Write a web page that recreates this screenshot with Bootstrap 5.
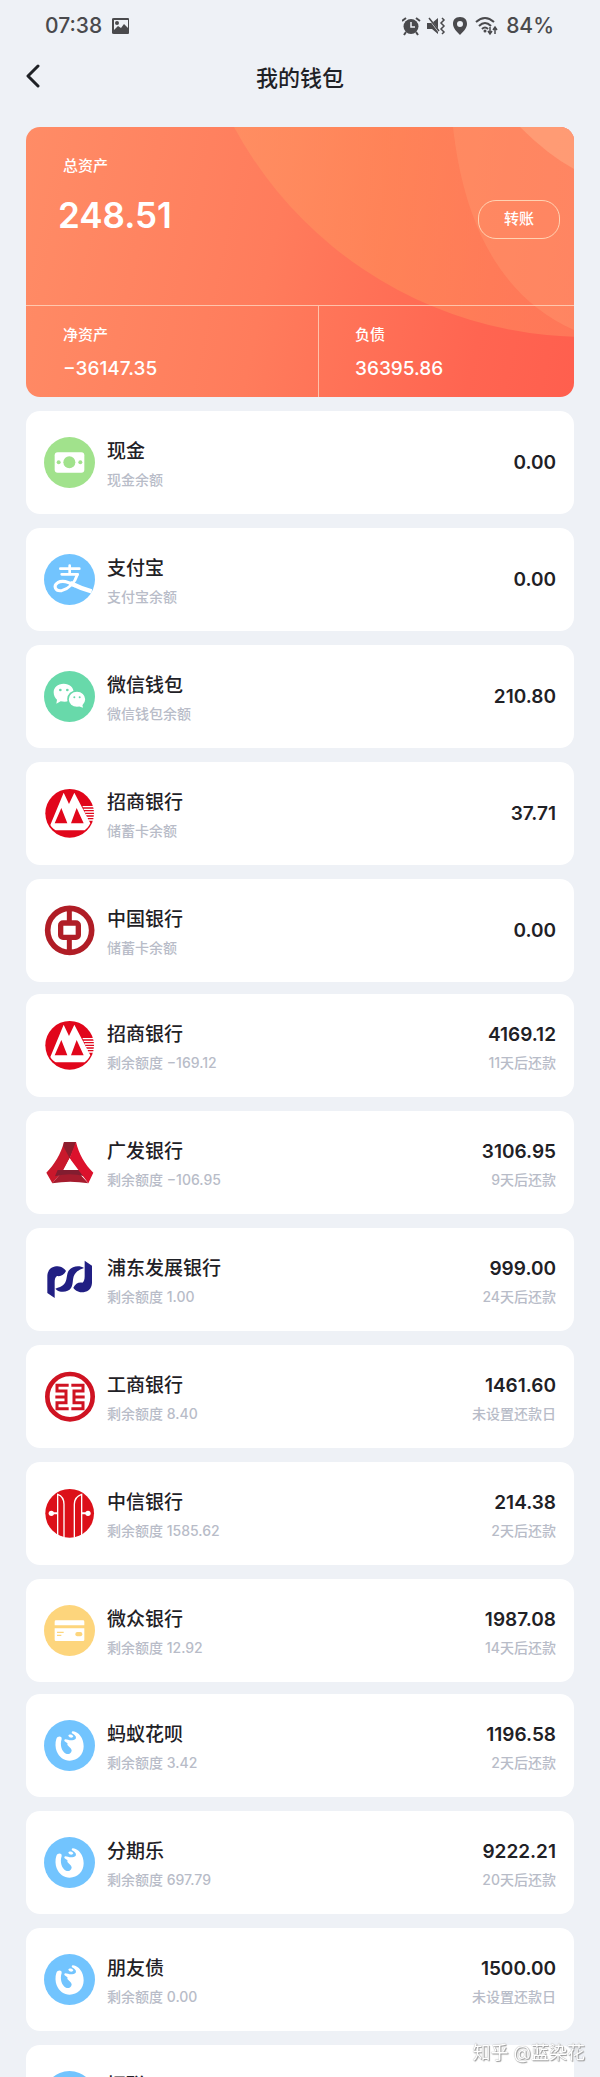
<!DOCTYPE html>
<html lang="zh-CN">
<head>
<meta charset="utf-8">
<meta name="viewport" content="width=device-width, initial-scale=1">
<title>我的钱包</title>
<link href="https://cdn.jsdelivr.net/npm/bootstrap@5.3.0/dist/css/bootstrap.min.css" rel="stylesheet">
<style>
  body { background: #eef1f6; color: #1f2126; font-family: Inter, "Noto Sans CJK SC", sans-serif; height: 100vh; overflow: hidden; }
  .status { height: 51px; padding: 0 46px 0 45px; color: #4a4a4d; font-size: 21px; font-weight: 500; line-height: 28px; }
  .topbar { height: 53px; margin-bottom: 23px; }
  .topbar h1 { font-size: 22px; font-weight: 500; line-height: 30px; }
  .back { left: 17px; top: 9px; width: 32px; height: 32px; color: #1f2126; }
  main { padding: 0 26px; }
  .assets { border-radius: 14px; background: linear-gradient(102deg, #ff8c66 0%, #ff7c5c 45%, #ff6551 82%, #ff5f4e 100%); color: #fff; }
  .assets-top { height: 179px; padding: 25px 14px 0 32px; border-bottom: 1px solid rgba(255,235,215,.65); }
  .assets-label { font-size: 15px; font-weight: 500; line-height: 28px; }
  .assets-top .assets-label { padding-left: 5px; }
  .total { font-size: 35px; font-weight: 600; line-height: 46px; }
  .total-row { margin-top: 11px; }
  .transfer { width: 82px; height: 39px; margin-top: 9px; border: 1px solid rgba(255,235,205,.75); border-radius: 18px; color: #fff; font-size: 15px; font-weight: 500; }
  .half { height: 91px; padding: 15px 0 0 37px; }
  .half + .half { padding-left: 36px; border-left: 1px solid rgba(255,235,215,.65); }
  .half-value { font-size: 19px; font-weight: 500; line-height: 40px; }
  .half-net { flex: 0 0 292px; }
  .accounts { gap: 14px; margin-top: 12px; }
  .funds { margin-top: 14px; }
  .account { height: 103px; padding: 0 18px; gap: 12px; border-radius: 14px; background: #fff; color: inherit; flex-shrink: 0; }
  .account > svg { width: 51px; height: 51px; flex: none; }
  .lines { padding-top: 5px; }
  .name { font-size: 19px; font-weight: 500; line-height: 30px; }
  .amount { font-size: 19px; font-weight: 600; line-height: 30px; }
  .note { font-size: 14px; font-weight: 500; line-height: 26px; color: #b8bcc8; }
  .watermark { right: 15px; bottom: 9px; font-size: 18px; line-height: 30px; color: #fff; text-shadow: 0 0 1px #888, 1px 1px 1px #999; }
</style>
</head>
<body>
<svg width="0" height="0" class="position-absolute" aria-hidden="true">
  <symbol id="cash" viewBox="72 111 153 153">
    <circle cx="148.500" cy="187.500" r="76.500" fill="#a1e28c"/>
    <rect x="104" y="157" width="89" height="61" rx="9" fill="#fff"/>
    <g fill="#a1e28c"><circle cx="148" cy="187" r="18"/><circle cx="116" cy="187" r="6"/><circle cx="181" cy="187" r="6"/></g>
  </symbol>
  <symbol id="alipay" viewBox="72 460 153 153">
    <circle cx="148.500" cy="536.500" r="76.500" fill="#72c4fe"/>
    <g fill="none" stroke="#fff" stroke-width="8" stroke-linecap="round">
      <path d="M121 504H178M149 495V521M125 521H173"/>
      <path d="M172 522C165 545 147 564 125 570C105 573 99 555 113 546C127 538 148 545 164 555" stroke-width="9"/>
      <path d="M150 547C172 558 192 566 215 572" stroke-width="13" stroke-linecap="butt"/>
    </g>
  </symbol>
  <symbol id="wechat" viewBox="72 90 153 153">
    <circle cx="148.500" cy="166.500" r="76.500" fill="#68d9aa"/>
    <path d="M131 128C113 128 101 139 101 154C101 163 105 171 111 176L109 188L122 181C126 182 130 182 134 182C152 181 161 169 161 155C161 139 149 128 131 128Z" fill="#fff"/>
    <path d="M171 150C155 150 144 161 144 175C144 190 156 200 171 200L178 199L192 204L190 193C195 188 198 182 198 175C198 160 186 150 171 150Z" fill="#fff" stroke="#68d9aa" stroke-width="5"/>
    <g fill="#68d9aa"><circle cx="121" cy="147" r="4"/><circle cx="142" cy="147" r="4"/><circle cx="163" cy="169" r="3"/><circle cx="179" cy="169" r="3"/></g>
  </symbol>
  <symbol id="cmb" viewBox="72 441 153 153">
    <circle cx="149" cy="517" r="73" fill="#e1061b"/>
    <path d="M131 455L147 489L163 455L211 547C207 556 201 563 194 568H107C100 564 95 559 91 552Z" fill="#fff"/>
    <path d="M104 547L124 501L142 547ZM153 547L170 501L191 547Z" fill="#e1061b"/>
    <path d="M188 497H221M191 505H223M194 513H224M197 521H223M201 529H222M205 537H220" stroke="#fff" stroke-width="4"/>
  </symbol>
  <symbol id="boc" viewBox="72 101 153 153">
    <g fill="none" stroke="#b01d26">
      <circle cx="149" cy="177" r="66" stroke-width="17"/>
      <path d="M148 110V150M148 200V245" stroke-width="15"/>
      <rect x="122" y="155" width="53" height="43" rx="7" stroke-width="16"/>
    </g>
  </symbol>
  <symbol id="cgb" viewBox="72 96 153 153">
    <path d="M132 111H168L166 124L149 160L131 195L97 235L79 203C103 180 123 145 132 111Z" fill="#c9182c"/>
    <path d="M132 111H168L149 160L130 124Z" fill="#8c1d2e"/>
    <path d="M131 195H168L205 235Q150 226 97 235Z" fill="#a51c2e"/>
    <path d="M113 195H185L193 214Q150 201 105 214Z" fill="#821d30"/>
    <path d="M168 111C176 145 195 180 220 203L205 235L149 160Z" fill="#dc112c"/>
    <path d="M149 160L130 195H168Z" fill="#fff"/>
  </symbol>
  <symbol id="spdb" viewBox="72 447 153 153">
    <g fill="#211f83">
      <path d="M82 512C83 492 98 484 113 484C125 485 135 492 138 498C132 510 123 515 111 513C106 516 104 522 104 532V579L82 564Z"/>
      <path d="M216 534C215 554 200 562 185 562C173 561 163 554 160 548C166 536 175 531 187 533C192 530 194 524 194 514V467L216 482Z"/>
      <path d="M192 489C180 481 158 482 147 496C138 508 143 527 132 538C126 545 115 548 106 551C119 565 144 563 153 549C162 535 155 517 167 504C173 496 184 492 192 489Z"/>
    </g>
  </symbol>
  <symbol id="icbc" viewBox="72 91 153 153">
    <g fill="none" stroke="#cf1322">
      <circle cx="150" cy="168" r="68" stroke-width="14"/>
      <path d="M146 134H111V151H138V186H111V204H146M106 169H138M154 134H189V151H162V186H189V204H154M194 169H162" stroke-width="9"/>
    </g>
  </symbol>
  <symbol id="citic" viewBox="72 441 153 153">
    <circle cx="149" cy="517" r="73" fill="#dc1019"/>
    <g fill="none" stroke="#fff" stroke-width="4">
      <path d="M113 582V460C127 465 132 475 132 490V590M185 582V460C170 465 163 475 163 490V590"/>
      <path d="M95 517H112M186 517H203" stroke-width="6"/>
    </g>
    <g fill="#fff"><circle cx="94" cy="517" r="8"/><circle cx="204" cy="517" r="8"/></g>
  </symbol>
  <symbol id="webank" viewBox="72 101 153 153">
    <circle cx="148.500" cy="177.500" r="76.500" fill="#fdd57c"/>
    <path d="M108 147H189Q193 147 193 151V162H104V151Q104 147 108 147ZM104 171H193V205Q193 209 189 209H108Q104 209 104 205Z" fill="#fff"/>
    <path d="M111 183H131M111 192H124" stroke="#fdd57c" stroke-width="4"/>
    <rect x="166" y="182" width="21" height="13" rx="6" fill="#fdd57c"/>
  </symbol>
  <symbol id="loan" viewBox="72 451 153 153">
    <circle cx="148.500" cy="527.500" r="76.500" fill="#72c4fe"/>
    <path d="M125 508C126 499 113 498 109 508C105 520 106 534 110 545C117 563 132 573 149 573C173 573 191 555 191 530C191 505 176 487 159 485C154 485 154 490 158 492C170 498 171 508 161 511C151 514 143 510 136 509C131 510 132 514 137 517C142 520 144 521 142 525C143 529 155 534 155 543C153 552 145 555 138 552C125 546 119 526 125 508Z" fill="#fff"/>
    <path d="M145 498C147 493 157 494 160 500C158 506 148 505 145 498Z" fill="#fff"/>
  </symbol>
</svg>

<header>
  <div class="status d-flex align-items-center justify-content-between">
    <div class="d-flex align-items-center">
      <time>07:38</time>
      <svg class="ms-2" width="22" height="18" viewBox="0 0 22 18" aria-hidden="true"><path fill-rule="evenodd" fill="#4a4a4d" d="M4 1H18Q19 1 19 2V16Q19 17 18 17H4Q2 17 2 16V2Q2 1 4 1ZM4 3V13L8 9L11 11L14 7L18 11V3Z"/><circle cx="7" cy="6" r="2" fill="#4a4a4d"/></svg>
    </div>
    <div class="d-flex align-items-center gap-1">
      <svg width="100" height="20" viewBox="2 0 100 20" fill="none" stroke="#4a4a4d" aria-hidden="true">
        <circle cx="11" cy="10.500" r="7.500" fill="#4a4a4d" stroke="none"/><path d="M2 5L6 2M16 2L20 5M6 16L4 19M16 16L18 19" stroke-width="2"/><path d="M11 6V11H15" stroke="#eef1f6" stroke-width="1.500"/>
        <path d="M27 7H32L38 2V18L32 13H27Z" fill="#4a4a4d" stroke="none"/><path d="M28 1L40 17" stroke="#eef1f6" stroke-width="2"/><path d="M29 2L39 15M42 2L44 4L41 7L44 10L41 13L44 16L42 18" stroke-width="1.500"/>
        <path fill-rule="evenodd" fill="#4a4a4d" stroke="none" d="M60 1C55 1 53 4 53 8C53 12 57 16 60 19C63 16 67 12 67 8C67 4 65 1 60 1ZM60 5A3 3 0 1 1 60 11A3 3 0 1 1 60 5Z"/>
        <path d="M76 6Q85 -2 94 6M79 10Q85 4 91 10M82 13Q85 10 88 13" stroke-width="2"/><circle cx="85" cy="15" r="1.500" fill="#4a4a4d" stroke="none"/><path d="M90 11V18M88 15L90 18L92 15M95 18V12M93 14L95 11L97 14" stroke-width="1.500"/>
      </svg>
      <span>84%</span>
    </div>
  </div>
  <nav class="topbar position-relative d-flex align-items-center justify-content-center">
    <button type="button" class="back btn p-0 border-0 position-absolute d-flex align-items-center justify-content-center" aria-label="返回">
      <svg width="16" height="24" viewBox="0 0 16 24" fill="none" stroke="currentColor" stroke-width="3" stroke-linecap="round" stroke-linejoin="round"><path d="M13 2L3 12L13 22"/></svg>
    </button>
    <h1 class="m-0">我的钱包</h1>
  </nav>
</header>

<main>
  <section class="assets position-relative overflow-hidden">
    <svg class="position-absolute top-0 start-0 w-100 h-100" viewBox="0 0 548 270" preserveAspectRatio="none" aria-hidden="true">
      <defs><linearGradient id="glow"><stop offset="0" stop-color="#ff9968" stop-opacity=".6"/><stop offset=".25" stop-color="#ff8c58" stop-opacity=".65"/><stop offset=".5" stop-color="#ff8560" stop-opacity=".6"/><stop offset="1" stop-color="#ff8a60" stop-opacity=".5"/></linearGradient></defs>
      <circle cx="560" cy="-190" r="400" fill="url(#glow)"/>
      <path d="M427 0C437 90 470 168 548 203V0Z" fill="#ff9a70" opacity=".4"/>
      <path d="M494 0Q522 28 548 42V0Z" fill="#ffa67e" opacity=".65"/>
    </svg>
    <div class="position-relative">
      <div class="assets-top">
        <div class="assets-label">总资产</div>
        <div class="total-row d-flex align-items-center justify-content-between">
          <div class="total">248.51</div>
          <button type="button" class="transfer btn p-0">转账</button>
        </div>
      </div>
      <div class="d-flex">
        <div class="half half-net"><div class="assets-label">净资产</div><div class="half-value">−36147.35</div></div>
        <div class="half flex-fill"><div class="assets-label">负债</div><div class="half-value">36395.86</div></div>
      </div>
    </div>
  </section>

  <!-- cash, wallets and debit cards -->
  <section class="accounts funds d-flex flex-column">
    <a href="#" class="account d-flex align-items-center text-decoration-none"><svg><use href="#cash"/></svg><div class="lines flex-fill"><div class="name">现金</div><div class="note">现金余额</div></div><div class="amount">0.00</div></a>
    <a href="#" class="account d-flex align-items-center text-decoration-none"><svg><use href="#alipay"/></svg><div class="lines flex-fill"><div class="name">支付宝</div><div class="note">支付宝余额</div></div><div class="amount">0.00</div></a>
    <a href="#" class="account d-flex align-items-center text-decoration-none"><svg><use href="#wechat"/></svg><div class="lines flex-fill"><div class="name">微信钱包</div><div class="note">微信钱包余额</div></div><div class="amount">210.80</div></a>
    <a href="#" class="account d-flex align-items-center text-decoration-none"><svg><use href="#cmb"/></svg><div class="lines flex-fill"><div class="name">招商银行</div><div class="note">储蓄卡余额</div></div><div class="amount">37.71</div></a>
    <a href="#" class="account d-flex align-items-center text-decoration-none"><svg><use href="#boc"/></svg><div class="lines flex-fill"><div class="name">中国银行</div><div class="note">储蓄卡余额</div></div><div class="amount">0.00</div></a>
  </section>

  <!-- credit cards -->
  <section class="accounts d-flex flex-column">
    <a href="#" class="account d-flex align-items-center text-decoration-none"><svg><use href="#cmb"/></svg><div class="lines flex-fill"><div class="name">招商银行</div><div class="note">剩余额度 −169.12</div></div><div class="lines text-end"><div class="amount">4169.12</div><div class="note">11天后还款</div></div></a>
    <a href="#" class="account d-flex align-items-center text-decoration-none"><svg><use href="#cgb"/></svg><div class="lines flex-fill"><div class="name">广发银行</div><div class="note">剩余额度 −106.95</div></div><div class="lines text-end"><div class="amount">3106.95</div><div class="note">9天后还款</div></div></a>
    <a href="#" class="account d-flex align-items-center text-decoration-none"><svg><use href="#spdb"/></svg><div class="lines flex-fill"><div class="name">浦东发展银行</div><div class="note">剩余额度 1.00</div></div><div class="lines text-end"><div class="amount">999.00</div><div class="note">24天后还款</div></div></a>
    <a href="#" class="account d-flex align-items-center text-decoration-none"><svg><use href="#icbc"/></svg><div class="lines flex-fill"><div class="name">工商银行</div><div class="note">剩余额度 8.40</div></div><div class="lines text-end"><div class="amount">1461.60</div><div class="note">未设置还款日</div></div></a>
    <a href="#" class="account d-flex align-items-center text-decoration-none"><svg><use href="#citic"/></svg><div class="lines flex-fill"><div class="name">中信银行</div><div class="note">剩余额度 1585.62</div></div><div class="lines text-end"><div class="amount">214.38</div><div class="note">2天后还款</div></div></a>
    <a href="#" class="account d-flex align-items-center text-decoration-none"><svg><use href="#webank"/></svg><div class="lines flex-fill"><div class="name">微众银行</div><div class="note">剩余额度 12.92</div></div><div class="lines text-end"><div class="amount">1987.08</div><div class="note">14天后还款</div></div></a>
  </section>

  <!-- consumer loans and debts -->
  <section class="accounts d-flex flex-column">
    <a href="#" class="account d-flex align-items-center text-decoration-none"><svg><use href="#loan"/></svg><div class="lines flex-fill"><div class="name">蚂蚁花呗</div><div class="note">剩余额度 3.42</div></div><div class="lines text-end"><div class="amount">1196.58</div><div class="note">2天后还款</div></div></a>
    <a href="#" class="account d-flex align-items-center text-decoration-none"><svg><use href="#loan"/></svg><div class="lines flex-fill"><div class="name">分期乐</div><div class="note">剩余额度 697.79</div></div><div class="lines text-end"><div class="amount">9222.21</div><div class="note">20天后还款</div></div></a>
    <a href="#" class="account d-flex align-items-center text-decoration-none"><svg><use href="#loan"/></svg><div class="lines flex-fill"><div class="name">朋友债</div><div class="note">剩余额度 0.00</div></div><div class="lines text-end"><div class="amount">1500.00</div><div class="note">未设置还款日</div></div></a>
    <a href="#" class="account d-flex align-items-center text-decoration-none"><svg><use href="#loan"/></svg><div class="lines flex-fill"><div class="name">招联</div><div class="note">剩余额度 0.00</div></div><div class="lines text-end"><div class="amount">1500.00</div><div class="note">未设置还款日</div></div></a>
  </section>
</main>
<div class="watermark position-fixed">知乎 @蓝染花</div>
<script src="https://cdn.jsdelivr.net/npm/bootstrap@5.3.0/dist/js/bootstrap.bundle.min.js"></script>
</body>
</html>
